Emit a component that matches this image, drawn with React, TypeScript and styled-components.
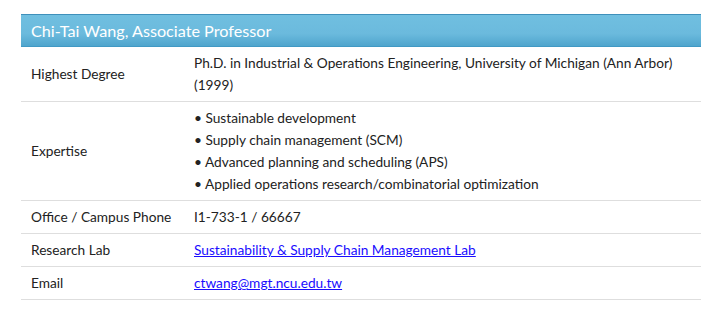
import styled, { createGlobalStyle } from "styled-components";

const GlobalStyle = createGlobalStyle`
	body {
		margin: 0;
		background: #fff;
		font-family: Lato, "Open Sans", sans-serif;
		color: #222;
	}
`;

const Page = styled.div`
	padding: 14px 20px 0 21px;
`;

const Panel = styled.div`
	width: 680px;
`;

const Heading = styled.h2`
	margin: 0;
	height: 33px;
	box-sizing: border-box;
	display: flex;
	align-items: center;
	padding: 0 10px 1px;
	border-top: 1px solid #3f90bb;
	border-bottom: 1px solid #4199c4;
	background: linear-gradient(to bottom, #70bfe0 0%, #6bbadd 60%, #4fa5cd 100%);
	color: #fff;
	font-size: 16.2px;
	font-weight: 400;
`;

const Table = styled.table`
	width: 100%;
	border-collapse: collapse;
	font-size: 13.7px;
	line-height: 22px;
`;

const Row = styled.tr`
	border-bottom: 1px solid #dedede;
`;

const Label = styled.td`
	width: 143px;
	padding: 5px 10px;
	vertical-align: middle;
`;

const Value = styled.td`
	padding: 5px 10px;
	vertical-align: middle;
`;

const Line = styled.div``;

const Link = styled.a`
	color: #1a0dff;
	text-decoration: underline;
`;

const expertise = [
	"Sustainable development",
	"Supply chain management (SCM)",
	"Advanced planning and scheduling (APS)",
	"Applied operations research/combinatorial optimization",
];

export default function App() {
	return (
		<>
			<GlobalStyle />
			<Page>
				<Panel>
					<Heading>Chi-Tai Wang, Associate Professor</Heading>
					<Table>
						<tbody>
							<Row>
								<Label>Highest Degree</Label>
								<Value>
									Ph.D. in Industrial &amp; Operations Engineering, University of Michigan (Ann Arbor) (1999)
								</Value>
							</Row>
							<Row>
								<Label>Expertise</Label>
								<Value>
									{expertise.map((item) => (
										<Line key={item}>• {item}</Line>
									))}
								</Value>
							</Row>
							<Row>
								<Label>Office / Campus Phone</Label>
								<Value>I1-733-1 / 66667</Value>
							</Row>
							<Row>
								<Label>Research Lab</Label>
								<Value>
									<Link href="#">Sustainability &amp; Supply Chain Management Lab</Link>
								</Value>
							</Row>
							<Row>
								<Label>Email</Label>
								<Value>
									<Link href="#">ctwang@mgt.ncu.edu.tw</Link>
								</Value>
							</Row>
						</tbody>
					</Table>
				</Panel>
			</Page>
		</>
	);
}
